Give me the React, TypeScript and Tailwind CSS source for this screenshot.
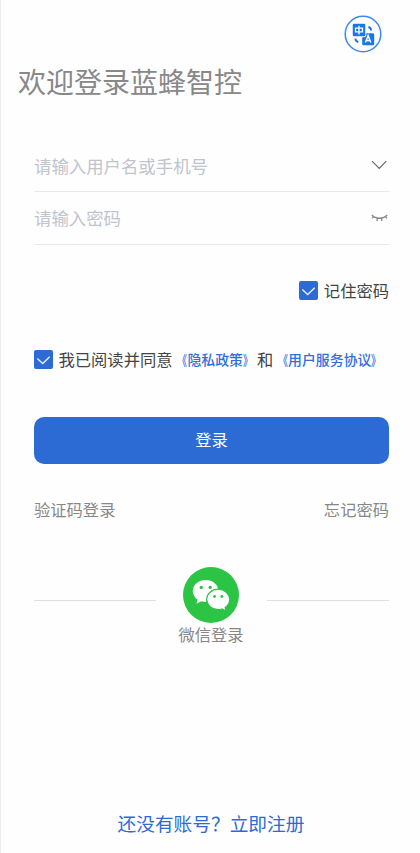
function TranslateIcon() {
  return (
    <svg className="h-[38px] w-[38px]" viewBox="0 0 38 38" fill="none">
      <circle cx="19" cy="19" r="17.8" stroke="#3b8be8" strokeWidth="1.5" />
      <rect x="18.2" y="18.2" width="12" height="12" rx="1.3" fill="#1677e6" />
      <rect x="8.2" y="8.2" width="13.6" height="13.6" rx="1.8" fill="#1677e6" stroke="#fff" strokeWidth="1" />
      <path d="M11.5 13.2h7v3.6h-7zM15 10.8v8.8" stroke="#fff" strokeWidth="1.3" />
      <path d="M21.4 27.6l2.7-7 2.7 7M22.4 25.5h3.4" stroke="#fff" strokeWidth="1.5" />
      <path d="M24.4 12c1.7.5 2.6 1.5 2.8 3.5M11.3 23.6c.2 1.9 1.2 2.9 3 3.4" stroke="#1677e6" strokeWidth="1.9" />
    </svg>
  )
}

function ChevronIcon() {
  return (
    <svg className="h-[10px] w-[18px]" viewBox="0 0 18 10" fill="none">
      <path d="M1.1 1.2l7.1 7.3 7.1-7.3" stroke="#666" strokeWidth="1.2" />
    </svg>
  )
}

function ClosedEyeIcon() {
  return (
    <svg className="h-[10px] w-[18px]" viewBox="0 0 18 10" fill="none">
      <path
        d="M.8 2c3.6 4.3 11.6 4.3 15.4 0M2.8 3.4L1.1 5.4M6.2 4.9v3M10.7 4.9v3M14.2 3.4l1.8 2"
        stroke="#888"
        strokeWidth="1.3"
      />
    </svg>
  )
}

function Checkbox() {
  return (
    <span className="flex h-[19px] w-[19px] shrink-0 items-center justify-center rounded-[2px] bg-[#2d6bd4]">
      <svg className="h-[19px] w-[19px]" viewBox="0 0 19 19" fill="none">
        <path d="M3.3 8.6l5.4 5 7-6.9" stroke="#e8f0ff" strokeWidth="1.4" />
      </svg>
    </span>
  )
}

function WechatIcon() {
  return (
    <svg className="h-14 w-14" viewBox="0 0 56 56">
      <circle cx="28" cy="28" r="28" fill="#2bc445" />
      <path d="M22.6 13C15.4 13 9.8 17.9 9.8 24.1c0 3.5 1.8 6.6 4.8 8.6l-1.2 4.1 4.9-2.5c1.4.4 2.8.6 4.3.6 7.2 0 12.9-4.8 12.9-10.9S29.8 13 22.6 13z" fill="#fff" />
      <path d="M35.2 22.2c-6.4 0-11.5 4.5-11.5 10.2s5.1 10.2 11.5 10.2c1.3 0 2.6-.2 3.8-.6l4.2 2.2-1-3.7c2.7-1.9 4.5-4.8 4.5-8.1 0-5.700-5.100-10.200-11.500-10.200z" fill="#fff" stroke="#2bc445" strokeWidth="1.3" />
      <circle cx="18.3" cy="20.4" r="1.7" fill="#2bc445" />
      <circle cx="27.2" cy="20.4" r="1.7" fill="#2bc445" />
      <circle cx="31.5" cy="29.5" r="1.4" fill="#2bc445" />
      <circle cx="38.8" cy="29.5" r="1.4" fill="#2bc445" />
    </svg>
  )
}

function PolicyLink({ title }: { title: string }) {
  return (
    <a className="ml-px text-[13.9px] font-medium text-[#2f6fdc]">
      <span className="inline-block origin-right scale-x-[0.7]">《</span>
      {title}
      <span className="inline-block origin-left scale-x-[0.7]">》</span>
    </a>
  )
}

export default function App() {
  return (
    <div className="flex h-[853px] w-[420px] flex-col border-l border-[#ececec] bg-[#fefefe] pr-[31px] pl-[33px] font-['Noto_Sans_CJK_SC',sans-serif] text-[16.3px] leading-6 whitespace-nowrap text-[#888]">
      <div className="flex h-[53px] items-end justify-end pr-[7px]">
        <TranslateIcon />
      </div>
      <h1 className="-ml-4 mt-2 text-[28px] leading-10">欢迎登录蓝蜂智控</h1>

      <div className="mt-[38px] flex h-[53px] items-center justify-between border-b border-[#e6eaeb] text-[17.4px] text-[#c0c4cc]">
        <span className="pt-px">请输入用户名或手机号</span>
        <ChevronIcon />
      </div>
      <div className="flex h-[53px] items-center justify-between border-b border-[#e6eaeb] text-[17.4px] text-[#c0c4cc]">
        <span>请输入密码</span>
        <ClosedEyeIcon />
      </div>

      <label className="mt-[33px] flex items-center justify-end gap-[5.5px] text-[#444]">
        <Checkbox />
        <span>记住密码</span>
      </label>

      <div className="mt-[45px] flex items-center text-[#444]">
        <Checkbox />
        <span className="ml-[5.5px]">我已阅读并同意</span>
        <PolicyLink title="隐私政策" />
        <span>和</span>
        <PolicyLink title="用户服务协议" />
      </div>

      <button className="mt-[46px] h-[47px] shrink-0 rounded-[10px] bg-[#2d6bd4] pb-[3px] text-white">登录</button>

      <div className="mt-[33px] flex justify-between">
        <a>验证码登录</a>
        <a>忘记密码</a>
      </div>

      <div className="mt-[46px] flex items-center">
        <div className="mt-[11px] h-px w-[122px] bg-[#dfdfdf]" />
        <div className="mr-[28px] ml-[27px]">
          <WechatIcon />
        </div>
        <div className="mt-[11px] h-px w-[122px] bg-[#dfdfdf]" />
      </div>
      <span className="-mt-px pr-px text-center">微信登录</span>

      <a className="mt-auto mb-4 pr-px text-center text-[18.7px] leading-7 text-[#2d6bd4]">还没有账号？立即注册</a>
    </div>
  )
}
